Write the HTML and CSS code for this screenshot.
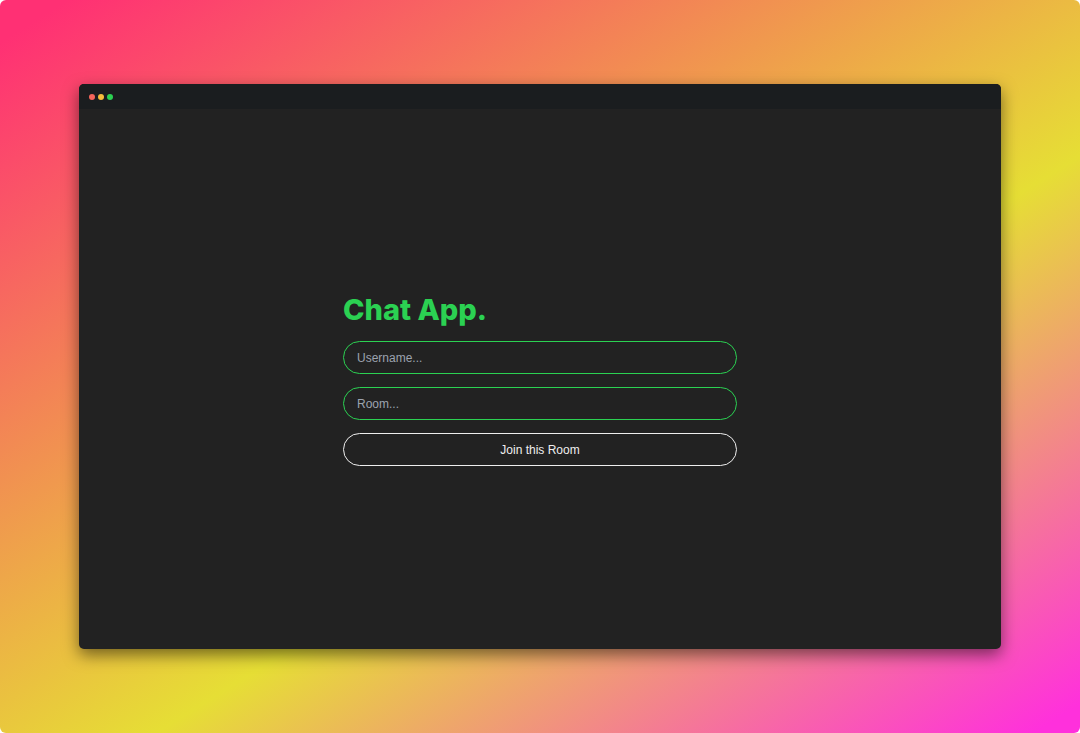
FILE: index.html
```html
<!DOCTYPE html>
<html lang="en">
<head>
  <meta charset="UTF-8">
  <meta name="viewport" content="width=device-width, initial-scale=1.0">
  <title>Chat App</title>
  <link rel="stylesheet" href="styles.css">
</head>
<body>
  <div class="backdrop">
    <div class="window">
      <header class="titlebar">
        <span class="dot dot-red"></span>
        <span class="dot dot-yellow"></span>
        <span class="dot dot-green"></span>
      </header>
      <main class="content">
        <form action="#" class="join-form">
          <h1>Chat App.</h1>
          <input type="text" class="field" name="username" placeholder="Username..." aria-label="Username">
          <input type="text" class="field" name="room" placeholder="Room..." aria-label="Room">
          <button type="submit" class="join-btn">Join this Room</button>
        </form>
      </main>
    </div>
  </div>
</body>
</html>
```

FILE: styles.css
```css
:root {
  --clr-dark: #222;
  --clr-titlebar: #1a1d1f;
  --clr-green: #2bd152;
  --clr-text: #eee;
}

* {
  padding: 0;
  margin: 0;
  box-sizing: border-box;
}

body {
  background-color: #fff;
  color: var(--clr-text);
  font-family: "Liberation Sans", Arial, sans-serif;
}

.backdrop {
  display: flex;
  min-height: 100vh;
  padding: 84px 79px;
  border-radius: 6px;
  background: linear-gradient(148deg, #ff3074 3%, #e6de35 59%, #ff30dc 98%);
}

.window {
  flex: 1;
  display: flex;
  flex-direction: column;
  border-radius: 5px;
  overflow: hidden;
  background-color: var(--clr-dark);
  box-shadow: 0 6px 16px rgba(0, 0, 0, .5);
}

.titlebar {
  display: flex;
  align-items: center;
  gap: 3px;
  height: 25px;
  padding: 0 10px;
  background-color: var(--clr-titlebar);
}

.dot {
  width: 6px;
  height: 6px;
  border-radius: 50%;
}

.dot-red {
  background-color: #f5655b;
}

.dot-yellow {
  background-color: #f6bd3b;
}

.dot-green {
  background-color: var(--clr-green);
}

.content {
  flex: 1;
  display: flex;
  justify-content: center;
  align-items: center;
}

.join-form {
  display: flex;
  flex-direction: column;
  gap: 13px;
  width: 394px;
  max-width: 90%;
}

h1 {
  color: var(--clr-green);
  font-family: Inter, sans-serif;
  font-size: 29px;
  font-weight: 800;
  line-height: 36px;
}

.field,
.join-btn {
  width: 100%;
  height: 33px;
  border: 1px solid var(--clr-green);
  border-radius: 17px;
  background-color: transparent;
  color: var(--clr-text);
  font-family: inherit;
  font-size: 12px;
}

.field {
  padding: 0 13px;
}

.field::placeholder {
  color: #9ca3af;
}

.join-btn {
  border-color: var(--clr-text);
  cursor: pointer;
}
```
